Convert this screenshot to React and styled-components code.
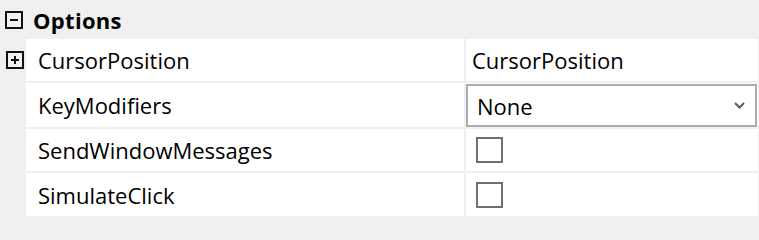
import styled, { createGlobalStyle } from 'styled-components';

// page reset
const GlobalStyle = createGlobalStyle`
  html, body {
    margin: 0;
    padding: 0;
    background: #f0f0f0;
  }
  body {
    font-family: "Open Sans", "Noto Sans", sans-serif;
    color: #000;
  }
`;

// styles
const Grid = styled.div`
  width: 759px;
  height: 217px;
  overflow: hidden;
  background: #f0f0f0;
`;

const Category = styled.div`
  height: 39px;
  display: flex;
  align-items: center;
  gap: 10px;
  padding-left: 5px;
  font-weight: 700;
  font-size: 22px;
  letter-spacing: 0.3px;
`;

const ToggleBox = styled.span`
  position: relative;
  box-sizing: border-box;
  width: 18px;
  height: 18px;
  flex: 0 0 18px;
  border: 2px solid #111;
  margin-left: ${props => props.$offset || 0}px;

  &::before,
  &::after {
    content: '';
    position: absolute;
    background: #111;
  }
  &::before {
    left: 3px;
    right: 3px;
    top: 6px;
    height: 2px;
  }
  &::after {
    display: ${props => (props.$plus ? 'block' : 'none')};
    top: 3px;
    bottom: 3px;
    left: 6px;
    width: 2px;
  }
`;

const Row = styled.div`
  display: flex;
  height: ${props => props.$h || 43}px;
  border-bottom: 2px solid #f0f0f0;
  margin-right: 1px;
`;

const Gutter = styled.div`
  width: 26px;
  flex: 0 0 26px;
  display: flex;
  align-items: center;
`;

const Name = styled.div`
  flex: 1;
  background: #fff;
  display: flex;
  align-items: center;
  padding-left: 12px;
  font-size: 22px;
`;

const Value = styled.div`
  width: 292px;
  flex: 0 0 292px;
  margin-left: 2px;
  background: #fff;
  display: flex;
  align-items: center;
  padding-left: ${props => props.$pad ?? 6}px;
  box-sizing: border-box;
  font-size: 22px;
`;

const Select = styled.div`
  flex: 1;
  align-self: stretch;
  margin: 1px 1px 0 0;
  border: 2px solid #ababb0;
  display: flex;
  align-items: center;
  justify-content: space-between;
  padding: 0 10px 0 9px;
`;

const Check = styled.span`
  box-sizing: border-box;
  width: 27px;
  height: 26px;
  border: 2px solid #707070;
  margin-left: 10px;
`;

function Chevron() {
  return (
    <svg width="11" height="7" viewBox="0 0 11 7">
      <path d="M1 1 L5.5 5.5 L10 1" fill="none" stroke="#5c5c5c" strokeWidth="2" />
    </svg>
  );
}

function App() {
  return (
    <Grid>
      <GlobalStyle />
      <Category>
        <ToggleBox />
        <span>Options</span>
      </Category>
      <Row $h={42}>
        <Gutter><ToggleBox $plus $offset={6} /></Gutter>
        <Name>CursorPosition</Name>
        <Value>CursorPosition</Value>
      </Row>
      <Row $h={44}>
        <Gutter />
        <Name>KeyModifiers</Name>
        <Value $pad={0}>
          <Select>
            <span>None</span>
            <Chevron />
          </Select>
        </Value>
      </Row>
      <Row $h={42}>
        <Gutter />
        <Name>SendWindowMessages</Name>
        <Value $pad={0}><Check /></Value>
      </Row>
      <Row $h={43}>
        <Gutter />
        <Name>SimulateClick</Name>
        <Value $pad={0}><Check /></Value>
      </Row>
    </Grid>
  );
}

export default App;
